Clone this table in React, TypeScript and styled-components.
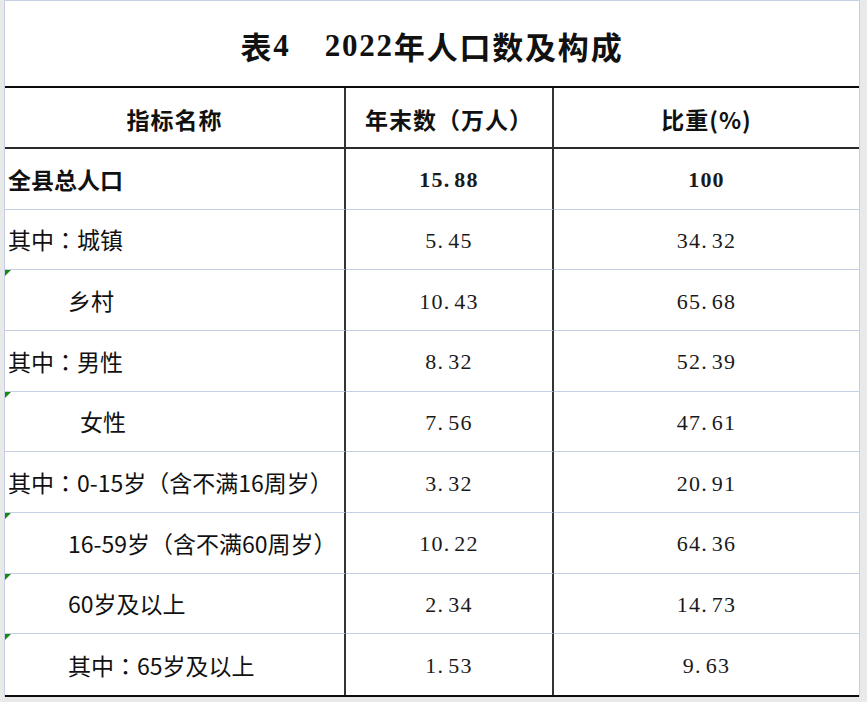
import React from "react";
import styled, { createGlobalStyle } from "styled-components";

const Global = createGlobalStyle`
  html, body { margin: 0; padding: 0; background: #e9e9e9; }
  body { font-family: "Noto Sans CJK SC", "Noto Sans", sans-serif; color: #111; }
`;

const Page = styled.div`
  width: 867px;
  height: 702px;
  background: #e9e9e9;
  padding-left: 4px;
  box-sizing: border-box;
  overflow: hidden;
`;

const Sheet = styled.div`
  width: 856px;
  height: 697px;
  box-sizing: border-box;
  background: #fff;
  border: 1px solid #c5d0e6;
  border-bottom: none;
  display: flex;
  flex-direction: column;
`;

const Title = styled.div`
  height: 85px;
  display: flex;
  align-items: center;
  justify-content: center;
  padding-top: 4px;
  box-sizing: border-box;
  font-family: "Liberation Serif", "Noto Sans CJK SC", serif;
  font-weight: 700;
  font-size: 31px;
  letter-spacing: 1.8px;
  color: #111;
`;

const TitleGap = styled.span`
  display: inline-block;
  width: 34px;
`;

const Cjk = styled.span`
  font-family: "Noto Sans CJK SC", sans-serif;
`;

const Colon = styled.span`
  font-family: "Noto Sans CJK TC", "Noto Sans CJK SC", sans-serif;
`;

const Table = styled.div`
  flex: 1;
  display: grid;
  grid-template-columns: 341px 208px 1fr;
  grid-template-rows: 61px repeat(9, 1fr);
  border-top: 2px solid #0c0c0c;
  border-bottom: 2px solid #0c0c0c;
`;

const HeadCell = styled.div<{ $last?: boolean }>`
  display: flex;
  align-items: center;
  justify-content: center;
  border-bottom: 2px solid #2a2a2a;
  border-right: ${(p) => (p.$last ? "none" : "2px solid #333")};
  font-family: "Noto Sans CJK SC", sans-serif;
  font-weight: 700;
  font-size: 23px;
  letter-spacing: 1px;
  color: #111;
  padding-top: 2px;
`;

const LabelCell = styled.div<{ $indent: number; $bold?: boolean; $last?: boolean }>`
  position: relative;
  display: flex;
  align-items: center;
  padding-left: ${(p) => p.$indent}px;
  border-bottom: ${(p) => (p.$last ? "none" : "1px solid #c5d0e6")};
  border-right: 2px solid #333;
  font-family: "Noto Sans CJK SC", sans-serif;
  font-weight: ${(p) => (p.$bold ? 700 : 400)};
  font-size: 23px;
  color: #111;
  white-space: nowrap;
`;

const Flag = styled.span`
  position: absolute;
  left: 0;
  top: 0;
  width: 0;
  height: 0;
  border-top: 6px solid #138a13;
  border-right: 6px solid transparent;
`;

const NumCell = styled.div<{ $bold?: boolean; $last?: boolean; $divider?: boolean }>`
  display: flex;
  align-items: center;
  justify-content: center;
  border-bottom: ${(p) => (p.$last ? "none" : "1px solid #c5d0e6")};
  border-right: ${(p) => (p.$divider ? "2px solid #333" : "none")};
  font-family: "Liberation Serif", "DejaVu Serif", serif;
  font-weight: ${(p) => (p.$bold ? 700 : 400)};
  font-size: 22px;
  letter-spacing: 1.2px;
  color: #1a1a1a;
  padding-top: 3px;
`;

const Dot = styled.span`
  margin-right: 4px;
`;

type Row = { label: string; indent: number; a: string; b: string; bold?: boolean; flag?: boolean };

const rows: Row[] = [
  { label: "全县总人口", indent: 3, a: "15.88", b: "100", bold: true },
  { label: "其中：城镇", indent: 3, a: "5.45", b: "34.32" },
  { label: "乡村", indent: 63, a: "10.43", b: "65.68", flag: true },
  { label: "其中：男性", indent: 3, a: "8.32", b: "52.39" },
  { label: "女性", indent: 75, a: "7.56", b: "47.61", flag: true },
  { label: "其中：0-15岁（含不满16周岁）", indent: 3, a: "3.32", b: "20.91" },
  { label: "16-59岁（含不满60周岁）", indent: 63, a: "10.22", b: "64.36", flag: true },
  { label: "60岁及以上", indent: 63, a: "2.34", b: "14.73", flag: true },
  { label: "其中：65岁及以上", indent: 63, a: "1.53", b: "9.63", flag: true },
];

function Label({ text }: { text: string }) {
  const parts = text.split("：");
  if (parts.length === 1) return <>{text}</>;
  return (
    <>
      {parts[0]}
      <Colon>：</Colon>
      {parts[1]}
    </>
  );
}

function Num({ value }: { value: string }) {
  const [int, frac] = value.split(".");
  if (frac === undefined) return <>{value}</>;
  return (
    <>
      {int}
      <Dot>.</Dot>
      {frac}
    </>
  );
}

export default function App() {
  return (
    <>
      <Global />
      <Page>
        <Sheet>
          <Title>
            <Cjk>表</Cjk>4<TitleGap />2022<Cjk>年人口数及构成</Cjk>
          </Title>
          <Table>
            <HeadCell>指标名称</HeadCell>
            <HeadCell>年末数（万人）</HeadCell>
            <HeadCell $last>比重(%)</HeadCell>
            {rows.map((r, i) => {
              const last = i === rows.length - 1;
              return (
                <React.Fragment key={r.label}>
                  <LabelCell $indent={r.indent} $bold={r.bold} $last={last}>
                    {r.flag && <Flag />}
                    <Label text={r.label} />
                  </LabelCell>
                  <NumCell $bold={r.bold} $last={last} $divider>
                    <Num value={r.a} />
                  </NumCell>
                  <NumCell $bold={r.bold} $last={last}>
                    <Num value={r.b} />
                  </NumCell>
                </React.Fragment>
              );
            })}
          </Table>
        </Sheet>
      </Page>
    </>
  );
}
